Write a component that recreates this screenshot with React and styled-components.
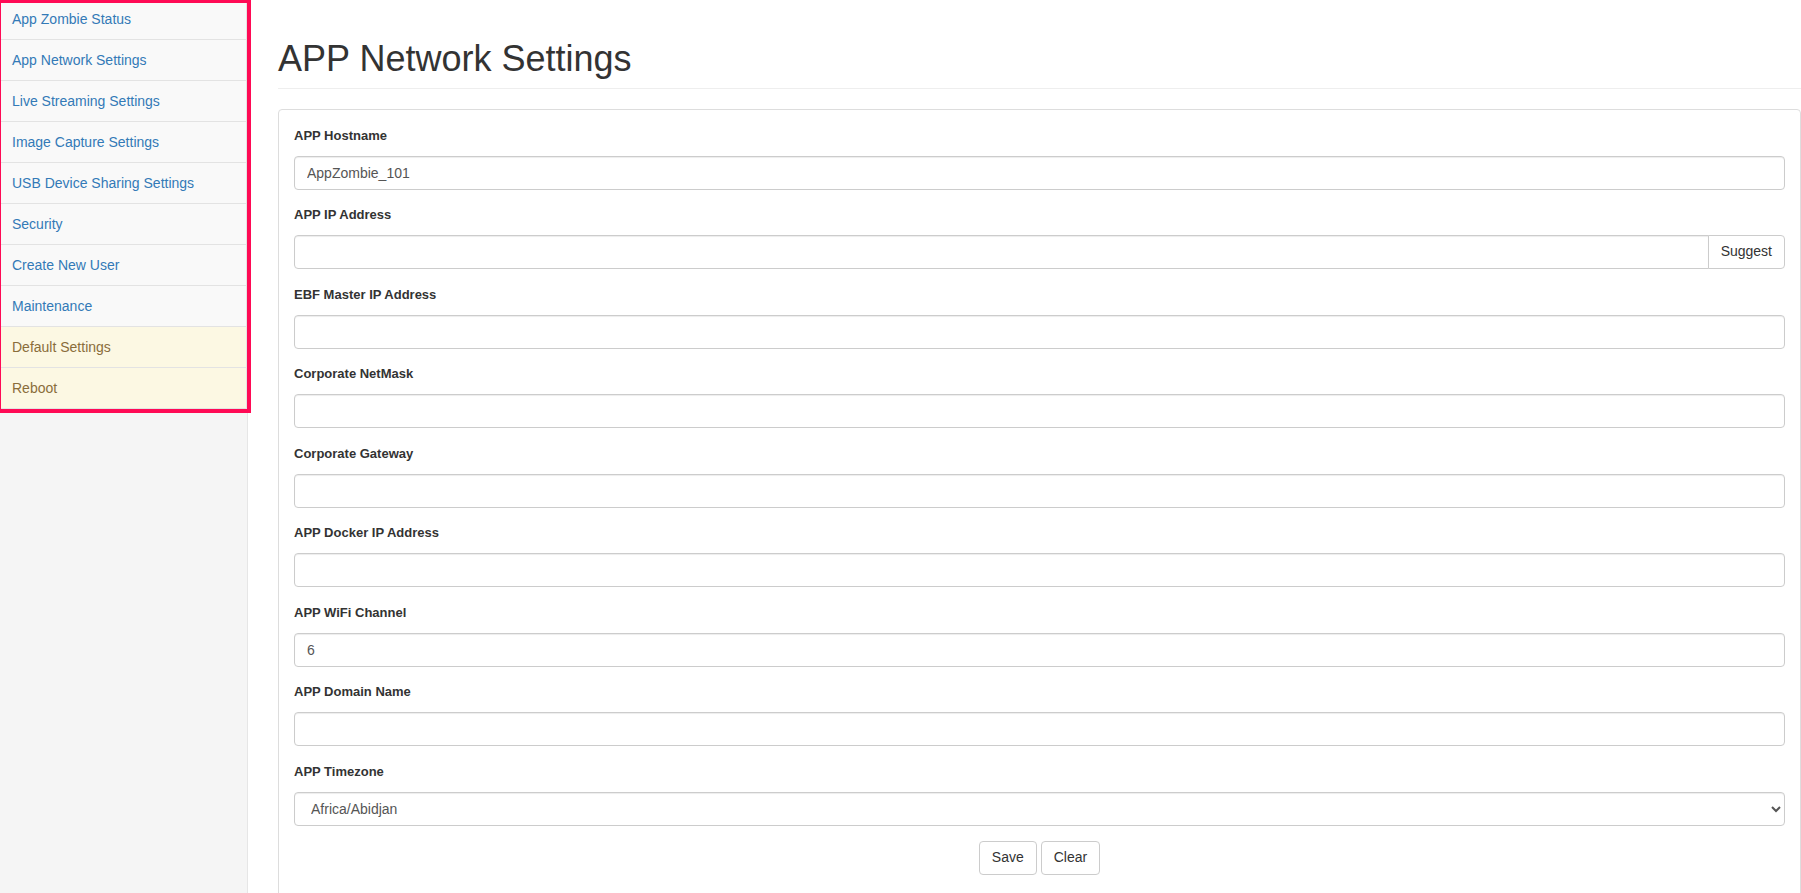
import React from "react";
import styled, { createGlobalStyle } from "styled-components";

const GlobalStyle = createGlobalStyle`
  html, body {
    margin: 0;
    padding: 0;
    overflow: hidden;
    background: #fff;
  }
  body {
    font-family: "Liberation Sans", Arial, Helvetica, sans-serif;
    font-size: 14px;
    line-height: 1.42857;
    color: #333;
  }
  * {
    box-sizing: border-box;
  }
`;

const Page = styled.div`
  display: flex;
  height: 100vh;
`;

const Sidebar = styled.aside`
  flex: 0 0 248px;
  width: 248px;
  min-width: 0;
  background: #f5f5f5;
  border-right: 1px solid #e6e6e6;
  position: relative;
  z-index: 1;
`;

/* red highlight frame around the nav list */
const NavFrame = styled.div`
  width: 251px;
  height: 413px;
  border-style: solid;
  border-color: #ff0a55;
  border-width: 3px 4px 4px 1px;
  overflow: hidden;
`;

const NavList = styled.ul`
  list-style: none;
  margin: -5px 0 0 -5px;
  padding: 0;
`;

const NavItem = styled.li`
  padding: 10px 15px;
  border: 1px solid #e3e3e3;
  margin-bottom: -1px;
  line-height: 20px;
  background: ${(p) => (p.$warning ? "#fcf8e3" : "#f9f9f9")};
  color: ${(p) => (p.$warning ? "#8a6d3b" : "#337ab7")};
  white-space: nowrap;
`;

const Main = styled.main`
  flex: 1;
  min-width: 0;
  padding-left: 30px;
`;

const Title = styled.h1`
  margin: 39px 0 20px;
  padding-bottom: 9px;
  border-bottom: 1px solid #eee;
  font-size: 36px;
  font-weight: 500;
  line-height: 1.1;
  color: #333;
`;

const Panel = styled.div`
  border: 1px solid #ddd;
  border-radius: 4px;
  background: #fff;
  padding: 16px 15px 15px;
  min-height: 800px;
`;

const FormGroup = styled.div`
  margin-bottom: 15.5px;
`;

const Label = styled.label`
  display: block;
  font-size: 13px;
  font-weight: 700;
  line-height: 20px;
  margin-bottom: 10px;
  color: #333;
`;

const Input = styled.input`
  display: block;
  width: 100%;
  height: 34px;
  padding: 6px 12px;
  font-family: inherit;
  font-size: 14px;
  line-height: 1.42857;
  color: #555;
  background: #fff;
  border: 1px solid #ccc;
  border-radius: ${(p) => (p.$grouped ? "4px 0 0 4px" : "4px")};
  box-shadow: inset 0 1px 1px rgba(0, 0, 0, 0.075);
  outline: none;
`;

const Select = styled.select`
  display: block;
  width: 100%;
  height: 34px;
  padding: 6px 12px;
  font-family: inherit;
  font-size: 14px;
  color: #555;
  background: #fff;
  border: 1px solid #ccc;
  border-radius: 4px;
  box-shadow: inset 0 1px 1px rgba(0, 0, 0, 0.075);
  outline: none;
`;

const InputGroup = styled.div`
  display: flex;
`;

const Button = styled.button`
  display: inline-block;
  padding: 6px 12px;
  font-family: inherit;
  font-size: 14px;
  line-height: 1.42857;
  color: #333;
  background: #fff;
  border: 1px solid #ccc;
  border-radius: ${(p) => (p.$addon ? "0 4px 4px 0" : "4px")};
  margin-left: ${(p) => (p.$addon ? "-1px" : "0")};
  white-space: nowrap;
  cursor: pointer;
`;

const Actions = styled.div`
  display: flex;
  justify-content: center;
  gap: 4px;
  margin-top: 8px;
`;

const navItems = [
  { label: "App Zombie Status" },
  { label: "App Network Settings" },
  { label: "Live Streaming Settings" },
  { label: "Image Capture Settings" },
  { label: "USB Device Sharing Settings" },
  { label: "Security" },
  { label: "Create New User" },
  { label: "Maintenance" },
  { label: "Default Settings", warning: true },
  { label: "Reboot", warning: true },
];

const fields = [
  { label: "APP Hostname", value: "AppZombie_101" },
  { label: "APP IP Address", value: "", suggest: true },
  { label: "EBF Master IP Address", value: "" },
  { label: "Corporate NetMask", value: "" },
  { label: "Corporate Gateway", value: "" },
  { label: "APP Docker IP Address", value: "" },
  { label: "APP WiFi Channel", value: "6" },
  { label: "APP Domain Name", value: "" },
];

function App() {
  return (
    <>
      <GlobalStyle />
      <Page>
        <Sidebar>
          <NavFrame>
            <NavList>
              {navItems.map((item) => (
                <NavItem key={item.label} $warning={item.warning}>
                  {item.label}
                </NavItem>
              ))}
            </NavList>
          </NavFrame>
        </Sidebar>

        <Main>
          <Title>APP Network Settings</Title>
          <Panel>
            {fields.map((f) => (
              <FormGroup key={f.label}>
                <Label>{f.label}</Label>
                {f.suggest ? (
                  <InputGroup>
                    <Input $grouped defaultValue={f.value} />
                    <Button $addon type="button">
                      Suggest
                    </Button>
                  </InputGroup>
                ) : (
                  <Input defaultValue={f.value} />
                )}
              </FormGroup>
            ))}
            <FormGroup>
              <Label>APP Timezone</Label>
              <Select defaultValue="Africa/Abidjan">
                <option>Africa/Abidjan</option>
                <option>Africa/Accra</option>
                <option>Europe/London</option>
              </Select>
            </FormGroup>
            <Actions>
              <Button type="button">Save</Button>
              <Button type="button">Clear</Button>
            </Actions>
          </Panel>
        </Main>
      </Page>
    </>
  );
}

export default App;
